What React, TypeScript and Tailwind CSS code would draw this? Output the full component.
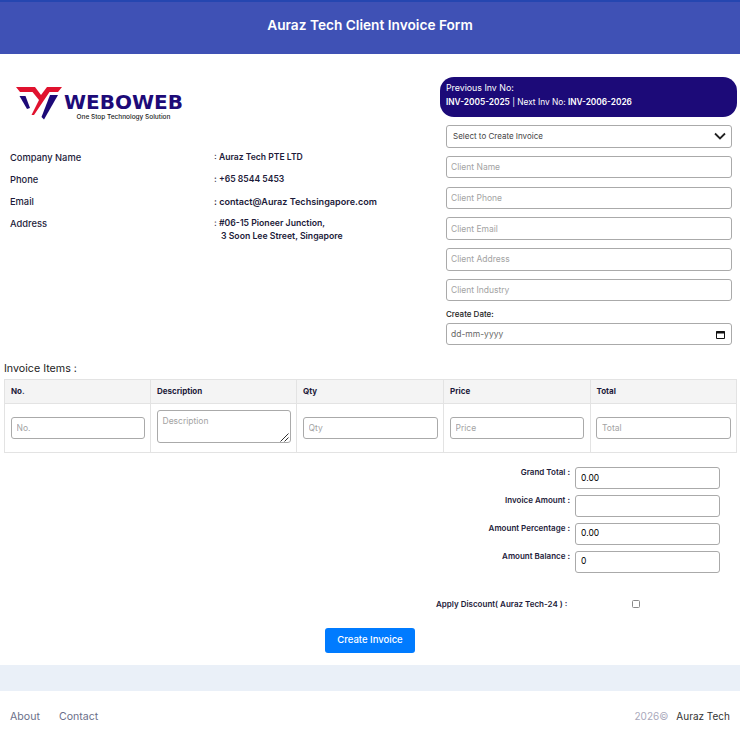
const font = "font-['Inter','Liberation_Sans',sans-serif]"
const field = 'w-full rounded-[3px] border border-[#aaaaaa] bg-white text-[8.5px] text-[#333333] placeholder:text-[#a3a3a3] outline-none'
const clientFields = ['Client Name', 'Client Phone', 'Client Email', 'Client Address', 'Client Industry']
const tableFields = ['No.', null, 'Qty', 'Price', 'Total']

const companyRows = [
  { label: 'Company Name', value: ': Auraz Tech PTE LTD', size: 'text-[8.6px]' },
  { label: 'Phone', value: ': +65 8544 5453', size: 'text-[8.6px]' },
  { label: 'Email', value: ': contact@Auraz Techsingapore.com', size: 'text-[9.1px]' },
]

const totals = [
  { label: 'Grand Total :', value: '0.00' },
  { label: 'Invoice Amount :', value: '' },
  { label: 'Amount Percentage :', value: '0.00' },
  { label: 'Amount Balance :', value: '0' },
]

function Logo() {
  return (
    <div className="flex items-start">
      <svg width="46" height="33" viewBox="0 0 46 33" className="shrink-0">
        <path d="M0 0H19L25 8L31 0H46L42 5H33.500L18 28H15.500L23 13L16.500 5H4Z" fill="#e0122e" />
        <path d="M3.500 9H9.500L14 21L11 22Z" fill="#1d0a78" />
        <path d="M34 8H42L28 32.500L25.500 30Z" fill="#1d0a78" />
      </svg>
      <div className="ml-[2px] mt-[5px] flex flex-col items-center">
        <div className="font-['DejaVu_Sans',sans-serif] text-[20px] font-bold leading-[20px] text-[#1d0a78]">WEBOWEB</div>
        <div className="mt-[1px] text-[6.5px] font-medium leading-[8px] text-[#222222]">One Stop Technology Solution</div>
      </div>
    </div>
  )
}

export default function App() {
  return (
    <div className={`${font} h-[740px] w-[740px] overflow-hidden bg-white text-[#1d1b3a]`}>
      <header className="flex h-[54px] items-center justify-center border-t-2 border-[#2546b0] bg-[#3f51b5]">
        <h1 className="pb-[6px] text-[13.7px] font-semibold text-white">Auraz Tech Client Invoice Form</h1>
      </header>

      <div className="flex pt-[23px]">
        <div className="w-[440px] shrink-0">
          <div className="pl-[16px] pt-[10px]">
            <Logo />
          </div>
          <div className="mt-[30px] flex flex-col gap-[9px] pl-[10px] text-[9.3px] font-medium leading-[13px]">
            {companyRows.map(row => (
              <div key={row.label} className="flex">
                <div className="w-[204px]">{row.label}</div>
                <div className={`${row.size} font-semibold`}>{row.value}</div>
              </div>
            ))}
            <div className="flex">
              <div className="w-[204px]">Address</div>
              <div className="text-[8.7px] font-semibold">
                <div>: #06-15 Pioneer Junction,</div>
                <div className="pl-[7px]">3 Soon Lee Street, Singapore</div>
              </div>
            </div>
          </div>
        </div>

        <div className="w-[297px]">
          <div className="flex h-[40px] flex-col justify-center rounded-[14px] bg-[#1c0a78] px-[6px] pb-[4px] text-white">
            <div className="text-[8.8px] leading-[14px]">Previous Inv No:</div>
            <div className="text-[8.3px] leading-[14px]">
              <b className="font-semibold">INV-2005-2025</b> | Next Inv No: <b className="font-semibold">INV-2006-2026</b>
            </div>
          </div>
          <div className="ml-[6px] mr-[5px] mt-[8px] flex flex-col gap-[8.3px]">
            <div className="flex h-[22.5px] items-center justify-between rounded-[3px] border border-[#aaaaaa] pl-[6px] pr-[5px] text-[8px] text-[#444444]">
              <span>Select to Create Invoice</span>
              <svg width="12" height="8" viewBox="0 0 12 8" fill="none" stroke="#222222" strokeWidth="1.800">
                <path d="M1 1.500L6 6.500L11 1.500" />
              </svg>
            </div>
            {clientFields.map(name => (
              <input key={name} className={`${field} h-[22.5px] px-[4px]`} placeholder={name} />
            ))}
          </div>
          <div className="ml-[6px] mr-[5px] mt-[7px]">
            <div className="mb-[2.500px] text-[8px] font-medium leading-[12px] text-[#222222]">Create Date:</div>
            <div className="flex h-[22.5px] items-center justify-between rounded-[3px] border border-[#aaaaaa] pl-[4px] pr-[6px] text-[8.5px] text-[#666666]">
              <span>dd-mm-yyyy</span>
              <svg width="9" height="9" viewBox="0 0 9 9">
                <path d="M0.500 1.500H8.500V8.500H0.500Z" fill="none" stroke="#111111" />
                <path d="M0.500 1H8.500V3.500H0.500Z" fill="#111111" />
              </svg>
            </div>
          </div>
        </div>
      </div>

      <div className="mt-[16px] pl-[4px] text-[10.7px] leading-[16px] text-[#222222]">Invoice Items :</div>

      <table className="ml-[4px] mt-[1.500px] w-[733px] table-fixed border-collapse text-[8px] font-bold">
        <thead>
          <tr className="h-[24px] bg-[#f4f4f4] text-left">
            <th className="w-[146px] border border-[#e3e3e3] pl-[6px]">No.</th>
            <th className="w-[146px] border border-[#e3e3e3] pl-[6px]">Description</th>
            <th className="w-[147px] border border-[#e3e3e3] pl-[6px]">Qty</th>
            <th className="w-[146.500px] border border-[#e3e3e3] pl-[6px]">Price</th>
            <th className="border border-[#e3e3e3] pl-[6px]">Total</th>
          </tr>
        </thead>
        <tbody>
          <tr className="h-[49px] font-normal">
            {tableFields.map(name => (
              <td key={name ?? 'description'} className="border border-[#e3e3e3] px-[5.5px]">
                {name ? (
                  <input className={`${field} h-[22.5px] px-[5px]`} placeholder={name} />
                ) : (
                  <div className="relative pb-[2px]">
                    <textarea className={`${field} block h-[33px] resize-none px-[5px] py-[4px] leading-[12px]`} placeholder="Description" />
                    <svg width="9" height="9" viewBox="0 0 9 9" className="absolute bottom-[3px] right-[2px]" stroke="#333333" strokeWidth="1">
                      <path d="M0.500 8.500L8.500 0.500M4.500 8.500L8.500 4.500" />
                    </svg>
                  </div>
                )}
              </td>
            ))}
          </tr>
        </tbody>
      </table>

      <div className="ml-[436px] mt-[14.500px] flex w-[284px] flex-col gap-[5.700px]">
        {totals.map(row => (
          <div key={row.label} className="flex h-[22px] justify-end gap-[5px]">
            <div className="text-[8px] font-semibold leading-[11px]">{row.label}</div>
            <input className={`${field} !w-[145px] shrink-0 px-[5px] text-black`} defaultValue={row.value} />
          </div>
        ))}
      </div>

      <div className="ml-[436px] mt-[25px] flex items-center">
        <div className="w-[196px] text-[8px] font-semibold leading-[12px]">Apply Discount( Auraz Tech-24 ) :</div>
        <input type="checkbox" className="h-[8px] w-[8px] appearance-none rounded-[1.5px] border border-[#8a8a8a]" />
      </div>

      <div className="mt-[18px] flex justify-center">
        <button className="h-[25px] w-[90px] rounded-[3px] bg-[#007bff] text-[9.5px] font-medium text-white">Create Invoice</button>
      </div>

      <div className="mt-[12px] h-[26px] bg-[#eaf0f8]" />

      <footer className="flex items-center justify-between px-[10px] pt-[18px] text-[10.6px] text-[#6b6f8a]">
        <div className="flex gap-[19px]">
          <span>About</span>
          <span>Contact</span>
        </div>
        <div className="text-[10px]">
          <span className="text-[#a9a9bb]">2026©</span>
          <span className="ml-[8px] text-[#333333]">Auraz Tech</span>
        </div>
      </footer>
    </div>
  )
}
